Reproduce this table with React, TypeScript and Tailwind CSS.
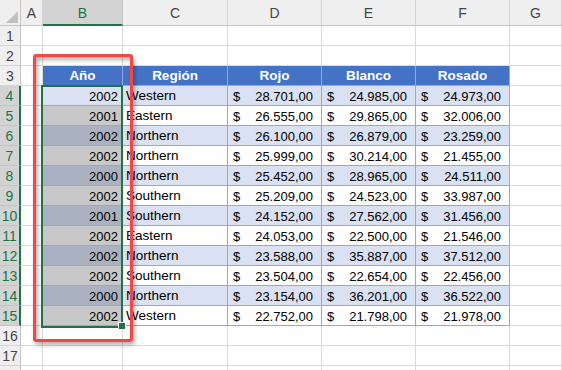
import React from "react";

type Row = [string, string, string, string, string];

const data: Row[] = [
  ["2002", "Western", "28.701,00", "24.985,00", "24.973,00"],
  ["2001", "Eastern", "26.555,00", "29.865,00", "32.006,00"],
  ["2002", "Northern", "26.100,00", "26.879,00", "23.259,00"],
  ["2002", "Northern", "25.999,00", "30.214,00", "21.455,00"],
  ["2000", "Northern", "25.452,00", "28.965,00", "24.511,00"],
  ["2002", "Southern", "25.209,00", "24.523,00", "33.987,00"],
  ["2001", "Southern", "24.152,00", "27.562,00", "31.456,00"],
  ["2002", "Eastern", "24.053,00", "22.500,00", "21.546,00"],
  ["2002", "Northern", "23.588,00", "35.887,00", "37.512,00"],
  ["2002", "Southern", "23.504,00", "22.654,00", "22.456,00"],
  ["2000", "Northern", "23.154,00", "36.201,00", "36.522,00"],
  ["2002", "Western", "22.752,00", "21.798,00", "21.978,00"],
];

const cols = ["A", "B", "C", "D", "E", "F", "G"];
const headers = ["Año", "Región", "Rojo", "Blanco", "Rosado"];

const grid = "border-r border-b border-r-[#dadada] border-b-[#dadada]";

function RowHeader({ n }: { n: number }) {
  const sel = n >= 4 && n <= 15;
  return (
    <div
      className={
        sel
          ? "h-5 pt-[2px] flex items-center justify-center bg-[#d3d3d3] text-[#217346] text-[14px] border-b border-b-[#c4c4c4] border-r-2 border-r-[#217346]"
          : "h-5 pt-[2px] flex items-center justify-center bg-[#efefef] text-[#444] text-[14px] border-b border-b-[#d4d4d4] border-r border-r-[#c4c4c4]"
      }
    >
      {n <= 17 ? n : ""}
    </div>
  );
}

function EmptyCell() {
  return <div className={"h-5 bg-white " + grid} />;
}

function Money({ v, alt }: { v: string; alt: boolean }) {
  return (
    <div
      className={
        (alt ? "bg-[#d9e1f2] " : "bg-white ") +
        "h-5 pt-[2px] flex items-center justify-between pl-[5px] pr-[8px] border-r border-b border-r-[#8ea9db] border-b-[#8ea9db]"
      }
    >
      <span>$</span>
      <span>{v}</span>
    </div>
  );
}

export default function App() {
  const rows: React.ReactNode[] = [];

  rows.push(
    <div
      key="corner"
      className="h-[26px] bg-[#efefef] border-r border-b border-r-[#c4c4c4] border-b-[#c4c4c4] relative"
    >
      <svg className="absolute right-[2px] bottom-[2px]" width="12" height="12" viewBox="0 0 12 12">
        <polygon points="12,0 12,12 0,12" fill="#c1c1c1" />
      </svg>
    </div>
  );
  cols.forEach((c) => {
    rows.push(
      <div
        key={"h" + c}
        className={
          c === "B"
            ? "h-[26px] pt-[2px] flex items-center justify-center bg-[#d3d3d3] text-[#217346] text-[14px] border-r border-r-[#c4c4c4] border-b-2 border-b-[#217346]"
            : "h-[26px] pt-[2px] flex items-center justify-center bg-[#efefef] text-[#444] text-[14px] border-r border-r-[#d4d4d4] border-b border-b-[#c4c4c4]"
        }
      >
        {c}
      </div>
    );
  });

  for (let r = 1; r <= 18; r++) {
    rows.push(<RowHeader key={"rh" + r} n={r} />);
    if (r === 3) {
      rows.push(<EmptyCell key="a3" />);
      headers.forEach((h, i) => {
        rows.push(
          <div
            key={"th" + i}
            className="h-5 pt-[2px] flex items-center justify-center bg-[#4472c4] text-white text-[13.5px] font-bold border-r border-b border-r-[#8ea9db] border-b-[#8ea9db]"
          >
            {h}
          </div>
        );
      });
      rows.push(<EmptyCell key="g3" />);
    } else if (r >= 4 && r <= 15) {
      const d = data[r - 4];
      const alt = r % 2 === 0;
      rows.push(<EmptyCell key={"a" + r} />);
      const bBg =
        r === 4 ? "bg-[#d9e1f2] " : alt ? "bg-[#aab2c1] " : "bg-[#c8c8c8] ";
      rows.push(
        <div
          key={"b" + r}
          className={
            bBg +
            "h-5 pt-[2px] flex items-center justify-end pr-[4px] border-r border-b border-r-[#8ea9db] border-b-[#8ea9db]"
          }
        >
          {d[0]}
        </div>
      );
      rows.push(
        <div
          key={"c" + r}
          className={
            (alt ? "bg-[#d9e1f2] " : "bg-white ") +
            "h-5 pt-[2px] flex items-center pl-[3px] text-[13.5px] border-r border-b border-r-[#8ea9db] border-b-[#8ea9db]"
          }
        >
          {d[1]}
        </div>
      );
      rows.push(<Money key={"d" + r} v={d[2]} alt={alt} />);
      rows.push(<Money key={"e" + r} v={d[3]} alt={alt} />);
      rows.push(<Money key={"f" + r} v={d[4]} alt={alt} />);
      rows.push(<EmptyCell key={"g" + r} />);
    } else {
      cols.forEach((c) => rows.push(<EmptyCell key={c + r} />));
    }
  }

  return (
    <div className="relative w-[562px] h-[370px] overflow-hidden bg-white font-['Liberation_Sans',Arial,sans-serif] text-[13px] text-black">
      <div className="grid grid-cols-[21px_22px_80px_105px_94px_94px_94px_52px]">
        {rows}
      </div>
      <div className="absolute left-[41px] top-[85px] w-[82px] h-[243px] border-2 border-[#217346] pointer-events-none" />
      <div className="absolute left-[119px] top-[323px] w-[6px] h-[6px] bg-[#217346] outline outline-1 outline-white pointer-events-none" />
      <div className="absolute left-[33px] top-[54px] w-[100px] h-[288px] border-[3px] border-[#f04848] rounded-[3px] shadow-[2px_3px_4px_rgba(0,0,0,0.3),inset_2px_3px_4px_rgba(0,0,0,0.3)] pointer-events-none" />
    </div>
  );
}
